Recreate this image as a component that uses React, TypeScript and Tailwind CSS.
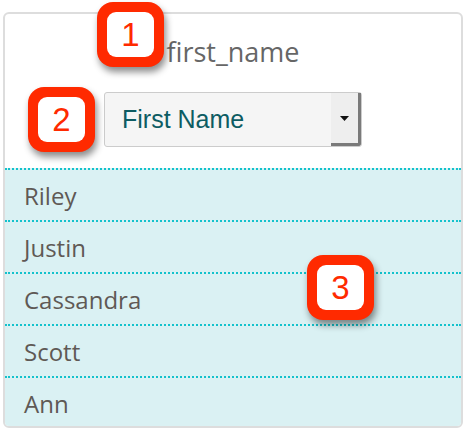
import React from 'react';

const names = ['Riley', 'Justin', 'Cassandra', 'Scott', 'Ann'];

function Callout({ n, className }: { n: number; className: string }) {
  return (
    <div
      className={`absolute w-[67px] h-[65px] rounded-[16px] bg-[#ff2a00] p-[10px] shadow-[2px_5px_7px_rgba(0,0,0,0.45)] ${className}`}
    >
      <div className="w-full h-full rounded-[9px] bg-white flex items-center justify-center text-[33px] leading-none text-[#ff2a00] font-['Liberation_Sans',Arial,sans-serif]">
        {n}
      </div>
    </div>
  );
}

export default function App() {
  return (
    <div className="relative w-[468px] h-[434px] bg-white font-['Open_Sans',sans-serif]">
      <div className="absolute left-[3px] top-[12px] w-[460px] h-[416px] border-2 border-[#dddddd] rounded-[6px] overflow-hidden flex flex-col">
        {/* header: field key + mapping select */}
        <div className="flex flex-col items-center pt-[21px] pb-[21px]">
          <div className="text-[27px] leading-[34px] text-[#666666]">first_name</div>
          <div className="mt-[23px] w-[258px] h-[55px] flex rounded-[3px] border border-[#cccccc] bg-[#f5f5f5] font-['Liberation_Sans',Arial,sans-serif]">
            <div className="flex-1 flex items-center pl-[17px] text-[25px] text-[#0d5c63]">First Name</div>
            <div className="w-[30px] flex items-center justify-center bg-[#eeeeee] border-r-[3px] border-b-[3px] border-[#7a7a7a] rounded-br-[3px]">
              <svg width="9" height="5" viewBox="0 0 9 5">
                <path d="M0 0h9L4.5 5z" fill="#111" />
              </svg>
            </div>
          </div>
        </div>
        {/* sample values */}
        <div className="flex-1 bg-[#daf1f3]">
          {names.map((name) => (
            <div
              key={name}
              className="h-[52px] flex items-center pl-[19px] pt-[2px] border-t-2 border-dotted border-[#13c2cc] text-[24px] text-[#5f5955]"
            >
              {name}
            </div>
          ))}
        </div>
      </div>
      <Callout n={1} className="left-[97px] top-[2px]" />
      <Callout n={2} className="left-[28px] top-[87px]" />
      <Callout n={3} className="left-[307px] top-[255px]" />
    </div>
  );
}
